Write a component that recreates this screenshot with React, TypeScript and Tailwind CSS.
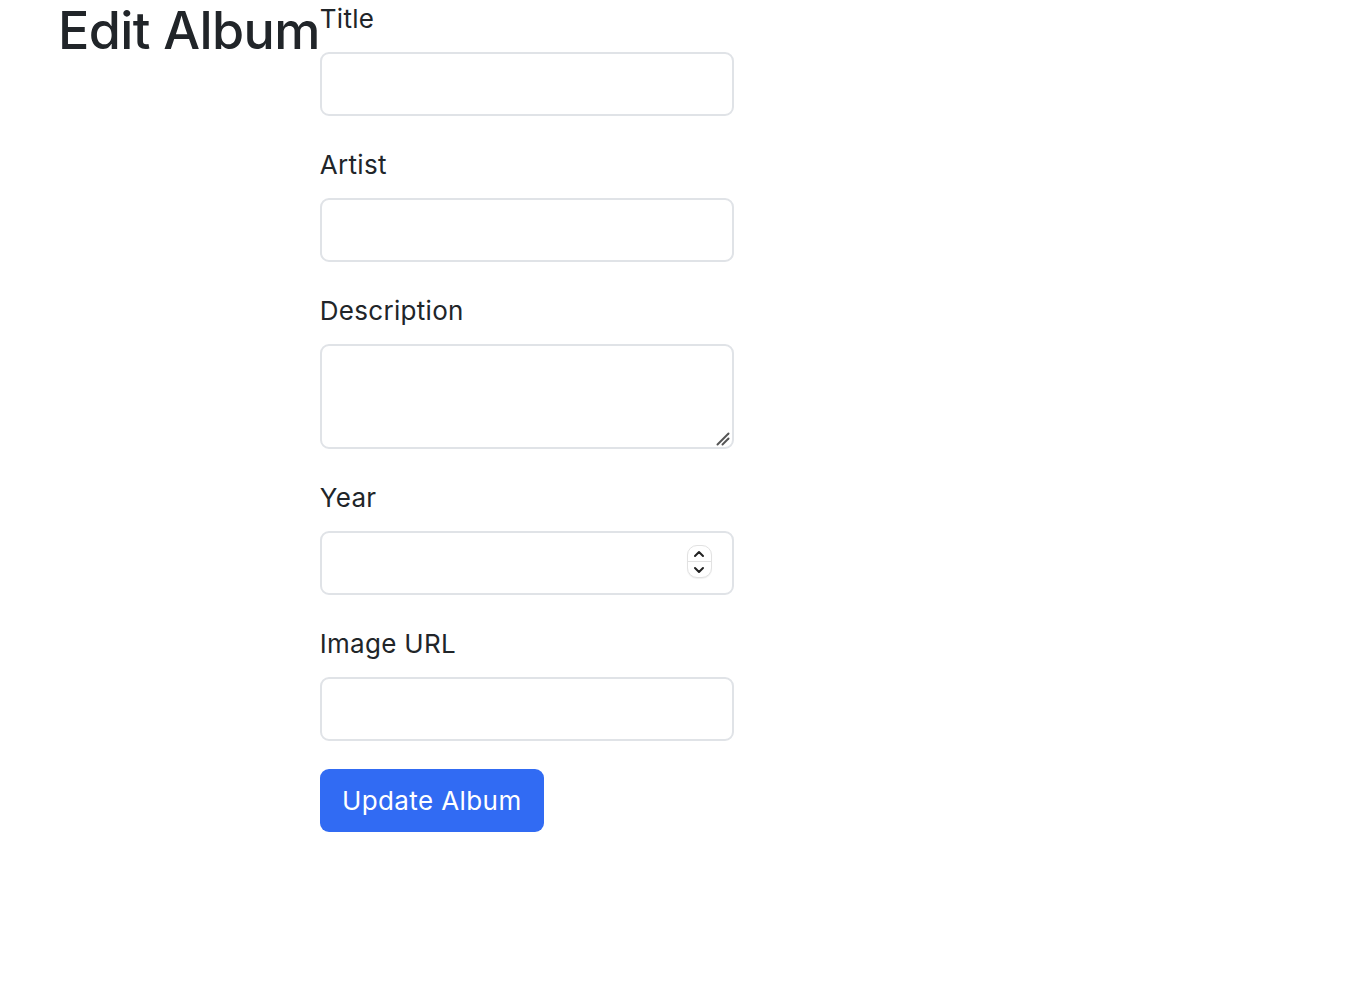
import React from "react";

const font = { fontFamily: "Inter, 'Noto Sans', sans-serif" };

function Field({ label, children }: { label: string; children: React.ReactNode }) {
  return (
    <div className="flex flex-col mb-[30px]">
      <label className="text-[26px] leading-[38px] tracking-[0.3px] text-[#212529] mb-[14px]">{label}</label>
      {children}
    </div>
  );
}

const inputCls =
  "w-[414px] h-[64px] rounded-[9px] border-2 border-[#e0e3e7] bg-white outline-none px-[18px] text-[24px]";

export default function App() {
  return (
    <div className="flex flex-row items-start bg-white min-h-[984px] pl-[58px]" style={font}>
      <h1 className="text-[52px] leading-[1.2] font-medium text-[#212529] m-0 tracking-[-0.6px]">Edit Album</h1>
      <form className="flex flex-col" onSubmit={(e) => e.preventDefault()}>
        <Field label="Title">
          <input className={inputCls} type="text" />
        </Field>
        <Field label="Artist">
          <input className={inputCls} type="text" />
        </Field>
        <Field label="Description">
          <div className="relative w-[414px] h-[105px]">
            <textarea className="w-[414px] h-[105px] rounded-[9px] border-2 border-[#e0e3e7] bg-white outline-none px-[18px] py-[10px] text-[24px] resize-none block" />
            <svg className="absolute left-[396px] top-[88px] pointer-events-none" width="14" height="14" viewBox="0 0 14 14">
              <path d="M1.5 12.5 L12.5 1.5" stroke="#555" strokeWidth="2" strokeLinecap="round" />
              <path d="M6.5 12.5 L12.5 6.5" stroke="#555" strokeWidth="2" strokeLinecap="round" />
            </svg>
          </div>
        </Field>
        <Field label="Year">
          <div className="relative w-[414px] h-[64px]">
            <input className={inputCls} type="text" inputMode="numeric" />
            <div className="absolute left-[367px] top-[14px] w-[25px] h-[33px] rounded-[10px] border border-[#e2e2e2] bg-white flex flex-col items-stretch shadow-[0_1px_1px_rgba(0,0,0,0.06)] overflow-hidden">
              <div className="flex-1 flex items-center justify-center">
                <svg width="12" height="8" viewBox="0 0 12 8">
                  <path d="M2 6 L6 2 L10 6" fill="none" stroke="#222" strokeWidth="2" strokeLinecap="round" strokeLinejoin="round" />
                </svg>
              </div>
              <div className="h-px bg-[#e2e2e2]" />
              <div className="flex-1 flex items-center justify-center">
                <svg width="12" height="8" viewBox="0 0 12 8">
                  <path d="M2 2 L6 6 L10 2" fill="none" stroke="#222" strokeWidth="2" strokeLinecap="round" strokeLinejoin="round" />
                </svg>
              </div>
            </div>
          </div>
        </Field>
        <div className="flex flex-col mb-[28px]">
          <label className="text-[26px] leading-[38px] tracking-[0.3px] text-[#212529] mb-[14px]">Image URL</label>
          <input className={inputCls} type="text" />
        </div>
        <div>
          <button
            type="submit"
            className="h-[63px] w-[224px] rounded-[9px] bg-[#316bf3] text-white text-[26px] leading-[36px] tracking-[0.4px]"
          >
            Update Album
          </button>
        </div>
      </form>
    </div>
  );
}
